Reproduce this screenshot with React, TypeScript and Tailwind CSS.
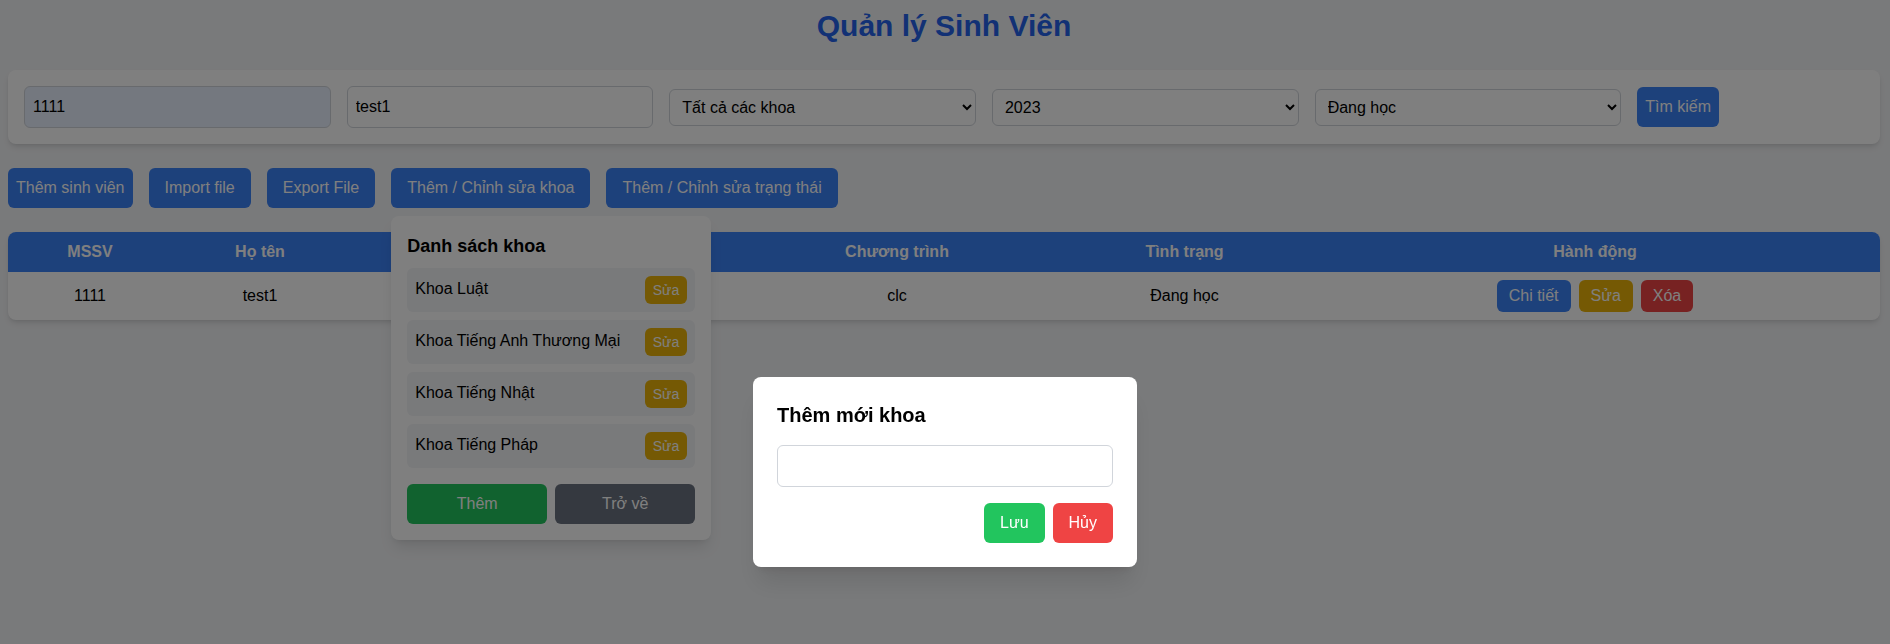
import { useState } from "react";

const khoaList = [
  "Khoa Luật",
  "Khoa Tiếng Anh Thương Mại",
  "Khoa Tiếng Nhật",
  "Khoa Tiếng Pháp",
];

export default function App() {
  const [mssv, setMssv] = useState("1111");
  const [name, setName] = useState("test1");

  return (
    <div className="min-h-screen bg-[#f3f4f6] pl-2 pr-[10px] pt-2 font-['Liberation_Sans',Arial,sans-serif] text-black">
      <h1 className="text-3xl font-bold text-center text-[#2563eb] mb-[26px]">
        Quản lý Sinh Viên
      </h1>

      {/* bộ lọc */}
      <div className="bg-white p-4 rounded-lg shadow-md flex items-center gap-4 mb-6">
        <input
          className="w-1/6 p-2 border border-[#d1d5db] rounded-md bg-[#e8f0fe]"
          value={mssv}
          onChange={(e) => setMssv(e.target.value)}
        />
        <input
          className="w-1/6 p-2 border border-[#d1d5db] rounded-md bg-white"
          value={name}
          onChange={(e) => setName(e.target.value)}
        />
        <select className="w-1/6 p-2 border border-[#d1d5db] rounded-md bg-white">
          <option>Tất cả các khoa</option>
        </select>
        <select className="w-1/6 p-2 border border-[#d1d5db] rounded-md bg-white">
          <option>2023</option>
        </select>
        <select className="w-1/6 p-2 border border-[#d1d5db] rounded-md bg-white">
          <option>Đang học</option>
        </select>
        <button className="bg-[#3b82f6] text-white px-2 py-2 rounded-md">
          Tìm kiếm
        </button>
      </div>

      {/* thanh nút */}
      <div className="flex gap-4 mb-6">
        <button className="bg-[#3b82f6] text-white px-2 py-2 rounded-md">
          Thêm sinh viên
        </button>
        <button className="bg-[#3b82f6] text-white px-4 py-2 rounded-md">
          Import file
        </button>
        <button className="bg-[#3b82f6] text-white px-4 py-2 rounded-md">
          Export File
        </button>
        <div className="relative">
          <button className="bg-[#3b82f6] text-white px-4 py-2 rounded-md">
            Thêm / Chỉnh sửa khoa
          </button>
          <div className="absolute left-0 top-full mt-2 w-80 bg-white p-4 rounded-lg shadow-lg z-10">
            <h3 className="text-lg font-bold mb-2">Danh sách khoa</h3>
            {khoaList.map((k) => (
              <div
                key={k}
                className="bg-[#f3f4f6] rounded-md p-2 mb-2 flex items-center justify-between"
              >
                <span className="-mt-0.5">{k}</span>
                <button className="bg-[#eab308] text-white text-sm px-2 py-1 rounded-md">
                  Sửa
                </button>
              </div>
            ))}
            <div className="flex gap-2 mt-4">
              <button className="flex-1 bg-[#22c55e] text-white py-2 rounded-md">
                Thêm
              </button>
              <button className="flex-1 bg-[#6b7280] text-white py-2 rounded-md">
                Trở về
              </button>
            </div>
          </div>
        </div>
        <button className="bg-[#3b82f6] text-white px-4 py-2 rounded-md">
          Thêm / Chỉnh sửa trạng thái
        </button>
      </div>

      {/* bảng */}
      <div className="bg-white rounded-lg shadow-md overflow-hidden">
        <table className="w-full table-fixed border-collapse">
          <thead className="bg-[#3b82f6] text-white">
            <tr>
              <th className="w-[164px] p-2">MSSV</th>
              <th className="w-[176px] p-2">Họ tên</th>
              <th className="w-[192px] p-2">Khoa</th>
              <th className="w-[195px] p-2">Khóa</th>
              <th className="w-[324px] p-2">Chương trình</th>
              <th className="w-[251px] p-2">Tình trạng</th>
              <th className="p-2">Hành động</th>
            </tr>
          </thead>
          <tbody>
            <tr className="text-center">
              <td className="p-2">1111</td>
              <td className="p-2">test1</td>
              <td className="p-2">Khoa Luật</td>
              <td className="p-2">2023</td>
              <td className="p-2">clc</td>
              <td className="p-2">Đang học</td>
              <td className="p-2">
                <div className="flex justify-center gap-2">
                  <button className="bg-[#3b82f6] text-white px-3 py-1 rounded-md">
                    Chi tiết
                  </button>
                  <button className="bg-[#eab308] text-white px-3 py-1 rounded-md">
                    Sửa
                  </button>
                  <button className="bg-[#ef4444] text-white px-3 py-1 rounded-md">
                    Xóa
                  </button>
                </div>
              </td>
            </tr>
          </tbody>
        </table>
      </div>

      {/* modal thêm khoa */}
      <div className="fixed inset-0 bg-black/50 flex justify-center items-start pt-[377px] z-50">
        <div className="bg-white w-96 p-6 rounded-lg shadow-xl">
          <h2 className="text-xl font-bold mb-4">Thêm mới khoa</h2>
          <input className="w-full p-2 border border-[#d1d5db] rounded-md mb-4" />
          <div className="flex justify-end gap-2">
            <button className="bg-[#22c55e] text-white px-4 py-2 rounded-md">
              Lưu
            </button>
            <button className="bg-[#ef4444] text-white px-4 py-2 rounded-md">
              Hủy
            </button>
          </div>
        </div>
      </div>
    </div>
  );
}
